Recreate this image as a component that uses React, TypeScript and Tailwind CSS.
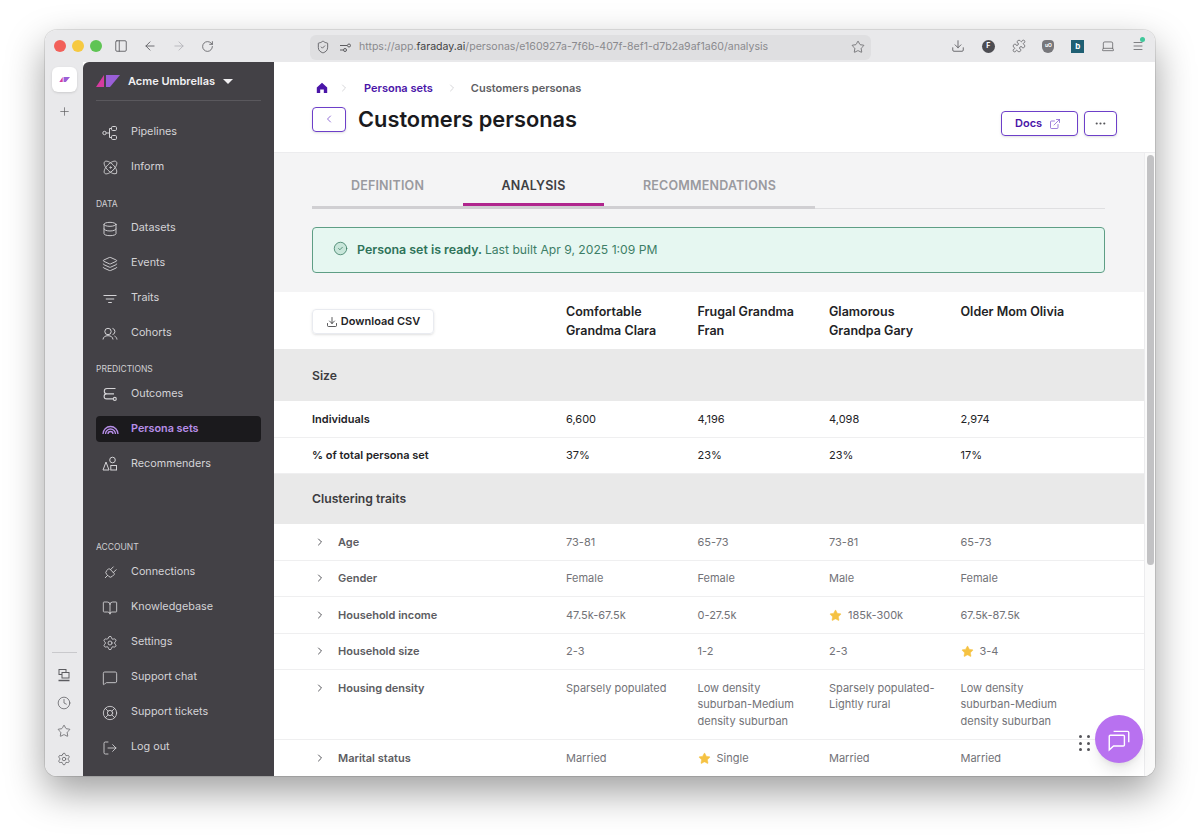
import React from 'react';
import {
  ArrowLeft, ArrowRight, Atom, BookOpen, ChevronLeft, ChevronRight, Database, Download, ExternalLink,
  Layers, LifeBuoy, LogOut, MessageSquare, PanelLeft, Plus, RotateCw, Settings, ShieldCheck, Star,
  Puzzle, Laptop, Clock, MoreHorizontal, CircleCheck, Plug, Menu,
} from 'lucide-react';

const PipelinesIcon = () => (
  <svg width="16" height="16" viewBox="0 0 16 16" fill="none" stroke="currentColor" strokeWidth="1">
    <circle cx="2.500" cy="8" r="1.700" />
    <rect x="9.500" y="1.500" width="5" height="4" rx="1.200" />
    <rect x="9.500" y="10.500" width="5" height="4" rx="1.200" />
    <path d="M4.200 8H7.500M7.500 3.500h2M7.500 12.500h2M7.500 3.500v9" />
  </svg>
);

const TraitsIcon = () => (
  <svg width="16" height="16" viewBox="0 0 16 16" fill="none" stroke="currentColor" strokeWidth="1.100">
    <path d="M1.500 4.500h13M3.800 8h8.400M6.200 11.500h3.600" />
  </svg>
);

const CohortsIcon = () => (
  <svg width="16" height="16" viewBox="0 0 16 16" fill="none" stroke="currentColor" strokeWidth="1">
    <circle cx="6" cy="5.500" r="3.200" />
    <path d="M1 13.500c.3-2.500 2-3.800 5-3.800s4.700 1.300 5 3.800M10.500 2.400a3.200 3.200 0 0 1 0 6.200M12.500 10c1.300.6 2.200 1.800 2.500 3.500" />
  </svg>
);

const OutcomesIcon = () => (
  <svg width="16" height="16" viewBox="0 0 16 16" fill="none" stroke="currentColor" strokeWidth="1.100">
    <path d="M13.500 2.500H5a2.700 2.700 0 0 0 0 5.400h7M6 7.900H4.600a2.500 2.500 0 0 0 0 5H11" />
    <circle cx="12.800" cy="12.900" r="1.500" />
  </svg>
);

const RainbowIcon = () => (
  <svg width="17" height="17" viewBox="0 0 17 17" fill="none" stroke="currentColor" strokeWidth="1.300">
    <path d="M1 13a7.500 7.500 0 0 1 15 0M3.500 13a5 5 0 0 1 10 0M6 13a2.500 2.500 0 0 1 5 0" />
  </svg>
);

const RecommendersIcon = () => (
  <svg width="16" height="16" viewBox="0 0 16 16" fill="none" stroke="currentColor" strokeWidth="1">
    <circle cx="10.500" cy="4" r="2.800" />
    <path d="M4 6L1 14h6z" />
    <rect x="8.800" y="9.500" width="5.700" height="4.500" />
  </svg>
);

const HomeIcon = () => (
  <svg width="12" height="12" viewBox="0 0 12 12" fill="#4a15a8">
    <path d="M6 .8L.8 5.600V11h3.400V7.500h3.600V11h3.400V5.600z" />
  </svg>
);

const ComputerIcon = () => (
  <svg width="14" height="14" viewBox="0 0 14 14" fill="none" stroke="currentColor" strokeWidth="1">
    <rect x="2" y="1.500" width="7" height="5" />
    <rect x="5" y="4.500" width="7" height="5.500" fill="#e9e9eb" />
    <path d="M1.500 12.500h11" strokeWidth="1.500" />
  </svg>
);

const navTop = [
  { label: 'Pipelines', icon: <PipelinesIcon /> },
  { label: 'Inform', icon: <Atom size={17} strokeWidth={1.300} /> },
];
const navData = [
  { label: 'Datasets', icon: <Database size={16} strokeWidth={1.400} /> },
  { label: 'Events', icon: <Layers size={16} strokeWidth={1.400} /> },
  { label: 'Traits', icon: <TraitsIcon /> },
  { label: 'Cohorts', icon: <CohortsIcon /> },
];
const navAccount = [
  { label: 'Connections', icon: <Plug size={16} strokeWidth={1.300} className="rotate-45" /> },
  { label: 'Knowledgebase', icon: <BookOpen size={16} strokeWidth={1.300} /> },
  { label: 'Settings', icon: <Settings size={16} strokeWidth={1.300} /> },
  { label: 'Support chat', icon: <MessageSquare size={16} strokeWidth={1.300} /> },
  { label: 'Support tickets', icon: <LifeBuoy size={16} strokeWidth={1.300} /> },
  { label: 'Log out', icon: <LogOut size={16} strokeWidth={1.300} /> },
];

const NavItem = ({ label, icon, active }: { label: string; icon: React.ReactNode; active?: boolean }) => (
  <div
    className={
      active
        ? 'flex items-center h-[26px] my-[4.500px] rounded bg-[#1b1a1d] text-[#b78ee8] font-semibold'
        : 'flex items-center h-[35px] text-[#d4d3d6]'
    }
  >
    <span className="w-[28px] mr-[7px] flex justify-center shrink-0">{icon}</span>
    <span className="text-[10.800px]">{label}</span>
  </div>
);

const SectionLabel = ({ children }: { children: React.ReactNode }) => (
  <div className="text-[8.500px] leading-[12px] text-[#d0cfd2] uppercase">{children}</div>
);

const Val = ({ children, star }: { children: React.ReactNode; star?: boolean }) => (
  <div className="flex items-start pr-3">
    {star && <Star size={13} className="text-[#f5c242] shrink-0 mr-[6px] mt-[2px]" fill="currentColor" strokeWidth={1} />}
    <span>{children}</span>
  </div>
);

const BandRow = ({ title, height }: { title: string; height: string }) => (
  <div className={`flex items-center bg-[#e9e9e9] pl-[38px] text-[12.200px] font-semibold text-[#3c3c40] ${height}`}>{title}</div>
);

const gridClass = 'grid grid-cols-[292px_131.500px_131.500px_131.500px_131.500px]';

const StatRow = ({ label, values }: { label: string; values: string[] }) => (
  <div className={`${gridClass} items-center h-[36.500px] border-b border-[#efeff0] text-[11px] text-[#232326]`}>
    <div className="pl-[38px] font-semibold">{label}</div>
    {values.map((v) => (
      <Val key={label + v}>{v}</Val>
    ))}
  </div>
);

type Cell = { v: string; star?: boolean };

const TraitRow = ({ label, values, tall }: { label: string; values: Cell[]; tall?: boolean }) => (
  <div
    className={`${gridClass} ${tall ? 'h-[70px]' : 'h-[36.500px]'} pt-[9.500px] border-b border-[#efeff0] text-[11px] leading-[16.700px] text-[#727277]`}
  >
    <div className="pl-[38px] flex items-start font-semibold text-[#5c5c61]">
      <ChevronRight size={12} strokeWidth={2} className="text-[#55555a] mt-[2px] mr-[12px] ml-[2px]" />
      <span>{label}</span>
    </div>
    {values.map((c, i) => (
      <Val key={i} star={c.star}>
        {c.v}
      </Val>
    ))}
  </div>
);

const cells = (...vals: (string | Cell)[]) => vals.map((v) => (typeof v === 'string' ? { v } : v));

const LogoMark = ({ size }: { size: number }) => (
  <svg width={size} height={size * 0.5} viewBox="0 0 24 12">
    <polygon points="0,12 8,0 8,12" fill="#d63ba0" />
    <polygon points="10,0 24,0 14,12 10,12" fill="#9a5fd8" />
  </svg>
);

export default function App() {
  return (
    <div className="min-h-screen bg-white pt-[30px] pl-[45px] font-['Inter',sans-serif]">
      <div className="relative w-[1110px] h-[746px] rounded-xl overflow-hidden flex flex-col bg-white ring-1 ring-black/10 shadow-[0_16px_38px_rgba(0,0,0,0.38)]">
        {/* browser chrome */}
        <div className="h-[32px] shrink-0 bg-[#e9e9eb] flex items-center text-[#5c5c60]">
          <div className="w-[265px] shrink-0 flex items-center pl-[9px]">
            <span className="w-3 h-3 rounded-full bg-[#f2605a]" />
            <span className="w-3 h-3 rounded-full bg-[#f6c941] ml-[6px]" />
            <span className="w-3 h-3 rounded-full bg-[#5fc454] ml-[6px]" />
            <PanelLeft size={14} className="ml-[12px]" strokeWidth={1.500} />
            <ArrowLeft size={14} className="ml-[15px]" strokeWidth={1.500} />
            <ArrowRight size={14} className="ml-[15px] text-[#b4b4b8]" strokeWidth={1.500} />
            <RotateCw size={13} className="ml-[15px]" strokeWidth={1.500} />
          </div>
          <div className="w-[561px] h-[25px] shrink-0 rounded-md bg-[#dfdfe1] flex items-center pl-[6px] pr-[6px] mt-[2px]">
            <ShieldCheck size={14} strokeWidth={1.500} />
            <svg className="ml-[9px]" width="13" height="13" viewBox="0 0 13 13" fill="none" stroke="currentColor" strokeWidth="1">
              <path d="M1 4.500h7M1 9h3" />
              <circle cx="10" cy="4.500" r="1.500" />
              <circle cx="6" cy="9" r="1.500" />
            </svg>
            <span className="ml-[7px] text-[10.570px] text-[#8a8a8e] flex-1">
              https://app.<span className="text-[#3f3f43]">faraday.ai</span>/personas/e160927a-7f6b-407f-8ef1-d7b2a9af1a60/analysis
            </span>
            <Star size={14} strokeWidth={1.300} />
          </div>
          <div className="flex-1 flex items-center justify-between pl-[80px] pr-[11px]">
            <Download size={14} strokeWidth={1.500} />
            <span className="w-[13px] h-[13px] rounded-full bg-[#4d4d52] text-white text-[7px] font-bold flex items-center justify-center">F</span>
            <Puzzle size={14} strokeWidth={1.300} />
            <span className="w-[12px] h-[13px] rounded-b-md rounded-t-sm bg-[#77777b] text-white text-[5px] font-bold flex items-center justify-center">uO</span>
            <span className="w-[13px] h-[13px] bg-[#1f5f73] text-white text-[8px] font-bold flex items-center justify-center">b</span>
            <Laptop size={14} strokeWidth={1.300} />
            <span className="relative">
              <Menu size={12} strokeWidth={1.500} />
              <span className="absolute -top-[3px] -right-[1px] w-[5px] h-[5px] rounded-full bg-[#3fc79a]" />
            </span>
          </div>
        </div>

        <div className="flex-1 flex min-h-0">
          {/* rail */}
          <div className="w-[38px] shrink-0 bg-[#e9e9eb] flex flex-col items-center pt-[5px] pb-[10px] text-[#5c5c60]">
            <div className="w-[25px] h-[25px] rounded-md bg-white shadow-sm flex items-center justify-center">
              <LogoMark size={11} />
            </div>
            <Plus size={13} strokeWidth={1.300} className="mt-[13px]" />
            <div className="mt-auto w-[25px] border-t border-[#c9c9cc] mb-[15px]" />
            <div className="flex flex-col items-center gap-[14px]">
              <ComputerIcon />
              <Clock size={14} strokeWidth={1.300} />
              <Star size={14} strokeWidth={1.300} />
              <Settings size={14} strokeWidth={1.300} />
            </div>
          </div>

          {/* sidebar */}
          <div className="w-[191px] shrink-0 bg-[#434146] rounded-tl-md px-[13px] flex flex-col">
            <div className="h-[39px] shrink-0 flex items-center border-b border-[#5a585d]">
              <LogoMark size={24} />
              <span className="ml-[8px] text-[11px] font-semibold text-[#f1f0f2]">Acme Umbrellas</span>
              <span className="ml-[8px] w-0 h-0 border-x-[5px] border-x-transparent border-t-[5px] border-t-[#f1f0f2]" />
            </div>
            <div className="mt-[14px]">
              {navTop.map((n) => (
                <NavItem key={n.label} {...n} />
              ))}
            </div>
            <div className="mt-[13px]">
              <SectionLabel>Data</SectionLabel>
            </div>
            <div className="mt-px">
              {navData.map((n) => (
                <NavItem key={n.label} {...n} />
              ))}
            </div>
            <div className="mt-[12px] mb-[1.500px]">
              <SectionLabel>Predictions</SectionLabel>
            </div>
            <NavItem label="Outcomes" icon={<OutcomesIcon />} />
            <NavItem label="Persona sets" icon={<RainbowIcon />} active />
            <NavItem label="Recommenders" icon={<RecommendersIcon />} />
            <div className="mt-auto mb-[2px]">
              <SectionLabel>Account</SectionLabel>
            </div>
            <div className="pb-[11px]">
              {navAccount.map((n) => (
                <NavItem key={n.label} {...n} />
              ))}
            </div>
          </div>

          {/* main */}
          <div className="flex-1 min-w-0 flex flex-col bg-white">
            <div className="h-[91px] shrink-0 border-b border-[#ececee] px-[38px] flex justify-between relative z-10">
              <div>
                <div className="flex items-center h-[12px] mt-[20px] ml-[4px] text-[11px] font-semibold">
                  <HomeIcon />
                  <ChevronRight size={12} className="text-[#c8c8cc] ml-[10px]" strokeWidth={1.500} />
                  <span className="ml-[14px] text-[#4a15a8]">Persona sets</span>
                  <ChevronRight size={12} className="text-[#c8c8cc] ml-[13px]" strokeWidth={1.500} />
                  <span className="ml-[13px] text-[#5f5f64]">Customers personas</span>
                </div>
                <div className="flex items-center mt-[9px]">
                  <div className="w-[34px] h-[25px] rounded border border-[#6d3fc9] flex items-center justify-center text-[#6d3fc9] shadow-sm">
                    <ChevronLeft size={12} strokeWidth={1.500} />
                  </div>
                  <h1 className="ml-[12px] text-[21.800px] font-semibold text-[#1a1a1d]">Customers personas</h1>
                </div>
              </div>
              <div className="flex items-start gap-[6px] pt-[49px]">
                <div className="w-[77px] h-[25px] rounded border border-[#6d3fc9] flex items-center pl-[13px] gap-[7px] text-[#4a15a8] shadow-sm text-[11px] font-semibold">
                  Docs
                  <ExternalLink size={12} strokeWidth={1.300} className="text-[#6d3fc9]" />
                </div>
                <div className="w-[33px] h-[25px] rounded border border-[#6d3fc9] flex items-center justify-center text-[#55555a] shadow-sm">
                  <MoreHorizontal size={13} strokeWidth={2} />
                </div>
              </div>
            </div>

            <div className="flex-1 min-h-0 flex">
              <div className="flex-1 min-w-0 bg-[#f4f4f5] overflow-hidden">
                <div className="pl-[38px] pr-[39px] pt-[14px]">
                  <div className="flex items-end h-[42px] border-b border-[#dfdfe1]">
                    <div className="flex border-b-[3px] border-[#d0cfd2] -mb-px text-[12.500px] font-semibold text-[#9a9a9f] tracking-[0.200px]">
                      <div className="w-[151px] h-[39px] flex items-center justify-center">DEFINITION</div>
                      <div className="w-[141px] h-[39px] flex items-center justify-center pt-[3px] text-[#3f3f43] border-b-[3px] border-[#b0258d] -mb-[3px]">ANALYSIS</div>
                      <div className="w-[211px] h-[39px] flex items-center justify-center">RECOMMENDATIONS</div>
                    </div>
                  </div>
                  <div className="mt-[18px] h-[46px] rounded border border-[#5e9e85] bg-[#e6f7f1] flex items-center pl-[20px] pt-px text-[12.150px] text-[#3d7e66]">
                    <CircleCheck size={15} strokeWidth={1.300} className="-mt-[4px] text-[#3d7e66] fill-[#c8e6da]" />
                    <span className="ml-[9px] text-[12.400px] font-semibold text-[#2f7359]">Persona set is ready.</span>
                    <span className="ml-[3px]">Last built Apr 9, 2025 1:09 PM</span>
                  </div>
                </div>

                <div className="mt-[19px] bg-white">
                  <div className={`${gridClass} h-[57px] items-start pt-[10px] text-[12.500px] leading-[19px] font-semibold text-[#232326]`}>
                    <div className="pl-[38px] pt-[7px]">
                      <div className="w-[122px] h-[25px] rounded border border-[#e9ebf0] shadow-sm flex items-center justify-center gap-[3px] text-[11px] leading-none">
                        <Download size={12} strokeWidth={1.500} />
                        Download CSV
                      </div>
                    </div>
                    <div className="pr-5">Comfortable Grandma Clara</div>
                    <div className="pr-5">Frugal Grandma Fran</div>
                    <div className="pr-5">Glamorous Grandpa Gary</div>
                    <div className="pr-5">Older Mom Olivia</div>
                  </div>
                  <BandRow title="Size" height="h-[52px] pt-[2px]" />
                  <StatRow label="Individuals" values={['6,600', '4,196', '4,098', '2,974']} />
                  <StatRow label="% of total persona set" values={['37%', '23%', '23%', '17%']} />
                  <BandRow title="Clustering traits" height="h-[50px]" />
                  <TraitRow label="Age" values={cells('73-81', '65-73', '73-81', '65-73')} />
                  <TraitRow label="Gender" values={cells('Female', 'Female', 'Male', 'Female')} />
                  <TraitRow label="Household income" values={cells('47.5k-67.5k', '0-27.5k', { v: '185k-300k', star: true }, '67.5k-87.5k')} />
                  <TraitRow label="Household size" values={cells('2-3', '1-2', '2-3', { v: '3-4', star: true })} />
                  <TraitRow
                    tall
                    label="Housing density"
                    values={cells('Sparsely populated', 'Low density suburban-Medium density suburban', 'Sparsely populated-Lightly rural', 'Low density suburban-Medium density suburban')}
                  />
                  <TraitRow label="Marital status" values={cells('Married', { v: 'Single', star: true }, 'Married', 'Married')} />
                </div>
              </div>
              {/* scrollbar */}
              <div className="w-[11px] shrink-0 bg-[#fafafa] border-l border-[#ececee] pt-[2px] flex justify-center">
                <div className="w-[7px] h-[410px] rounded-full bg-[#c2c2c4]" />
              </div>
            </div>
          </div>
        </div>

        {/* chat widget */}
        <div className="absolute right-[12px] bottom-[13px] w-[48px] h-[48px] rounded-full bg-[#b871f0] shadow-lg flex items-center justify-center text-white">
          <svg width="26" height="26" viewBox="0 0 24 24" fill="none" stroke="currentColor" strokeWidth="1.300">
            <path d="M3 9.500a1 1 0 0 1 1-1h12a1 1 0 0 1 1 1v8a1 1 0 0 1-1 1H7l-4 3.500z" />
            <path d="M7 5h13a1 1 0 0 1 1 1v9" />
          </svg>
        </div>
        <div className="absolute right-[65px] bottom-[25px] grid grid-cols-2 gap-x-[5px] gap-y-[3.500px]">
          {[0, 1, 2, 3, 4, 5].map((d) => (
            <span key={d} className="w-[3px] h-[3px] rounded-full bg-[#55555a]" />
          ))}
        </div>
      </div>
    </div>
  );
}
